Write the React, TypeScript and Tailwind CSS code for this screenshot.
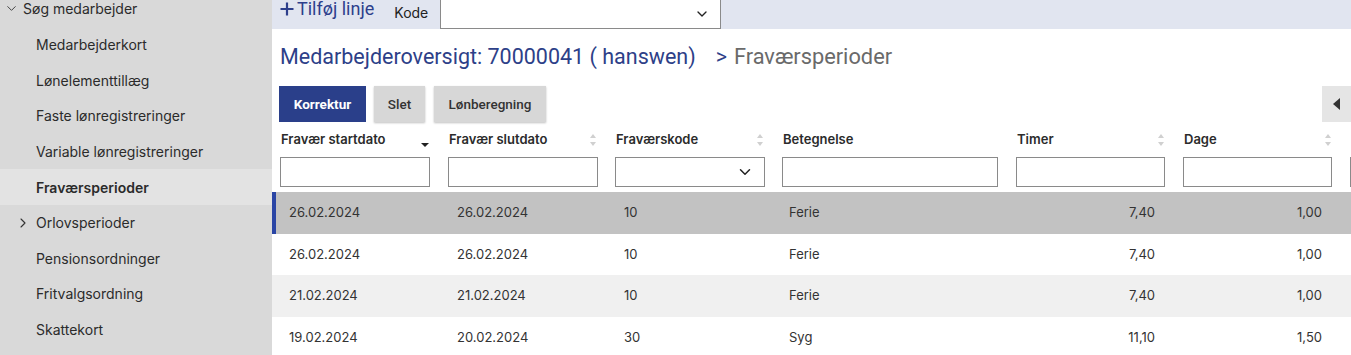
import { ChevronDown, ChevronRight } from 'lucide-react';

const menu = [
  { label: 'Medarbejderkort' },
  { label: 'Lønelementtillæg' },
  { label: 'Faste lønregistreringer' },
  { label: 'Variable lønregistreringer' },
  { label: 'Fraværsperioder', active: true },
  { label: 'Orlovsperioder', expandable: true },
  { label: 'Pensionsordninger' },
  { label: 'Fritvalgsordning' },
  { label: 'Skattekort' },
];

const columns = [
  { label: 'Fravær startdato', sort: 'desc', width: 'w-[168px]', input: 'w-[150px]' },
  { label: 'Fravær slutdato', sort: 'none', width: 'w-[167px]', input: 'w-[150px]' },
  { label: 'Fraværskode', sort: 'none', width: 'w-[167px]', input: 'w-[150px]', select: true },
  { label: 'Betegnelse', sort: null, width: 'w-[234px]', input: 'w-[216px]' },
  { label: 'Timer', sort: 'none', width: 'w-[167px]', input: 'w-[149px]' },
  { label: 'Dage', sort: 'none', width: 'w-[167px]', input: 'w-[149px]' },
];

const rows = [
  { start: '26.02.2024', end: '26.02.2024', code: '10', name: 'Ferie', hours: '7,40', days: '1,00' },
  { start: '26.02.2024', end: '26.02.2024', code: '10', name: 'Ferie', hours: '7,40', days: '1,00' },
  { start: '21.02.2024', end: '21.02.2024', code: '10', name: 'Ferie', hours: '7,40', days: '1,00' },
  { start: '19.02.2024', end: '20.02.2024', code: '30', name: 'Syg', hours: '11,10', days: '1,50' },
];

function SortIcon({ mode }: { mode: string }) {
  if (mode === 'desc') {
    return (
      <svg width="10" height="12" viewBox="0 0 10 12" className="mt-2">
        <path d="M1 5h8l-4 4z" fill="#222" />
      </svg>
    );
  }
  return (
    <svg width="10" height="16" viewBox="0 0 10 16">
      <path d="M2 6l3-4 3 4z" fill="#d0d0d0" />
      <path d="M2 10l3 4 3-4z" fill="#d0d0d0" />
    </svg>
  );
}

function Sidebar() {
  return (
    <aside className="w-[272px] shrink-0 bg-[#d9d9d9] text-[14px] text-[#2b2b2b] font-['Inter',sans-serif]">
      <div className="flex h-[18px] items-center gap-[4px] pl-[4px] -mt-[1px]">
        <ChevronDown size={15} strokeWidth={1.6} className="text-[#444]" />
        <span>Søg medarbejder</span>
      </div>
      <ul className="mt-[10px]">
        {menu.map((item) => (
          <li
            key={item.label}
            className={`relative flex h-[35.6px] items-center pl-[36px] ${
              item.active ? 'bg-[#e3e3e3] font-semibold' : ''
            }`}
          >
            {item.expandable && (
              <ChevronRight size={16} strokeWidth={1.6} className="absolute left-[15px] text-[#333]" />
            )}
            {item.label}
          </li>
        ))}
      </ul>
    </aside>
  );
}

export default function App() {
  return (
    <div className="flex h-[355px] w-[1351px] overflow-hidden bg-white">
      <Sidebar />
      <main className="flex min-w-0 flex-1 flex-col">
        <div className="flex h-[34px] items-start bg-[#e1e5f0] pl-[8px] font-['Roboto',sans-serif]">
          <button className="mt-[-1px] flex items-center gap-[3px] text-[18px] leading-[20px] text-[#2d3f8c]">
            <svg width="14" height="14" viewBox="0 0 14 14">
              <path d="M7 0.5v13M0.5 7h13" stroke="#2d3f8c" strokeWidth="2.2" />
            </svg>
            <span>Tilføj linje</span>
          </button>
          <span className="ml-[20px] mt-[2px] text-[14px] text-[#222] font-['Inter',sans-serif]">Kode</span>
          <div className="ml-[12px] -mt-[1px] flex h-[30px] w-[281px] items-center justify-end border border-[#8a8a8a] bg-white pr-[10px]">
            <ChevronDown size={16} strokeWidth={2} className="text-[#222]" />
          </div>
        </div>

        <div className="px-[8px]">
          <h1 className="mt-[14px] flex items-center text-[21.5px] leading-[28px] text-[#2d4088] font-['Roboto',sans-serif]">
            <span>Medarbejderoversigt: 70000041 ( hanswen)</span>
            <span className="ml-[20px] text-[#2d4088]">&gt;</span>
            <span className="ml-[7px] text-[21.8px] text-[#6a6a6a]">Fraværsperioder</span>
          </h1>

          <div className="mt-[15px] flex items-center font-['Roboto',sans-serif] text-[13.5px] font-medium">
            <button className="-ml-[1px] h-[36px] w-[87px] bg-[#2a3f8a] font-bold text-white">Korrektur</button>
            <button className="ml-[8px] h-[36px] w-[51px] bg-[#d7d7d7] text-[#333] shadow-[0_1px_2px_rgba(0,0,0,0.25)]">
              Slet
            </button>
            <button className="ml-[9px] h-[36px] w-[112px] bg-[#d7d7d7] text-[#333] shadow-[0_1px_2px_rgba(0,0,0,0.25)]">
              Lønberegning
            </button>
            <div className="ml-auto -mr-[8px] flex h-[36px] w-[29px] items-center justify-center bg-[#e5e5e5]">
              <svg width="10" height="14" viewBox="0 0 10 14">
                <path d="M8 1v12L1 7z" fill="#333" />
              </svg>
            </div>
          </div>

          <div className="mt-[6px] flex font-['Inter',sans-serif] text-[13px]">
            {columns.map((c) => (
              <div key={c.label} className={`${c.width} shrink-0`}>
                <div className="flex h-[24px] w-[150px] items-center justify-between pl-[1px] font-semibold text-[#2b2b2b]">
                  <span>{c.label}</span>
                  {c.sort && <SortIcon mode={c.sort} />}
                </div>
                <div className={`mt-[5px] flex h-[30px] ${c.input} items-center justify-end border border-[#8a8a8a] bg-white pr-[10px]`}>
                  {c.select && <ChevronDown size={18} strokeWidth={2} className="text-[#222]" />}
                </div>
              </div>
            ))}
            <div className="mt-[29px] h-[30px] w-[2px] shrink-0 border-l border-[#8a8a8a]" />
          </div>
        </div>

        <div className="mt-[5px] font-['Inter',sans-serif] text-[13px] text-[#333]">
          {rows.map((r, i) => (
            <div
              key={i}
              className={`flex h-[41.5px] items-center border-l-[4px] pl-[4px] ${
                i === 0
                  ? 'border-[#2a45a5] bg-[#c2c2c2]'
                  : i % 2 === 0
                    ? 'border-transparent bg-[#f0f0f0]'
                    : 'border-transparent bg-white'
              }`}
            >
              <div className="w-[168px] shrink-0 pl-[9px]">{r.start}</div>
              <div className="w-[167px] shrink-0 pl-[9px]">{r.end}</div>
              <div className="w-[167px] shrink-0 pl-[9px]">{r.code}</div>
              <div className="w-[234px] shrink-0 pl-[7px]">{r.name}</div>
              <div className="w-[150px] shrink-0 pr-[11px] text-right">{r.hours}</div>
              <div className="ml-[17px] w-[150px] shrink-0 pr-[11px] text-right">{r.days}</div>
            </div>
          ))}
        </div>
      </main>
    </div>
  );
}
